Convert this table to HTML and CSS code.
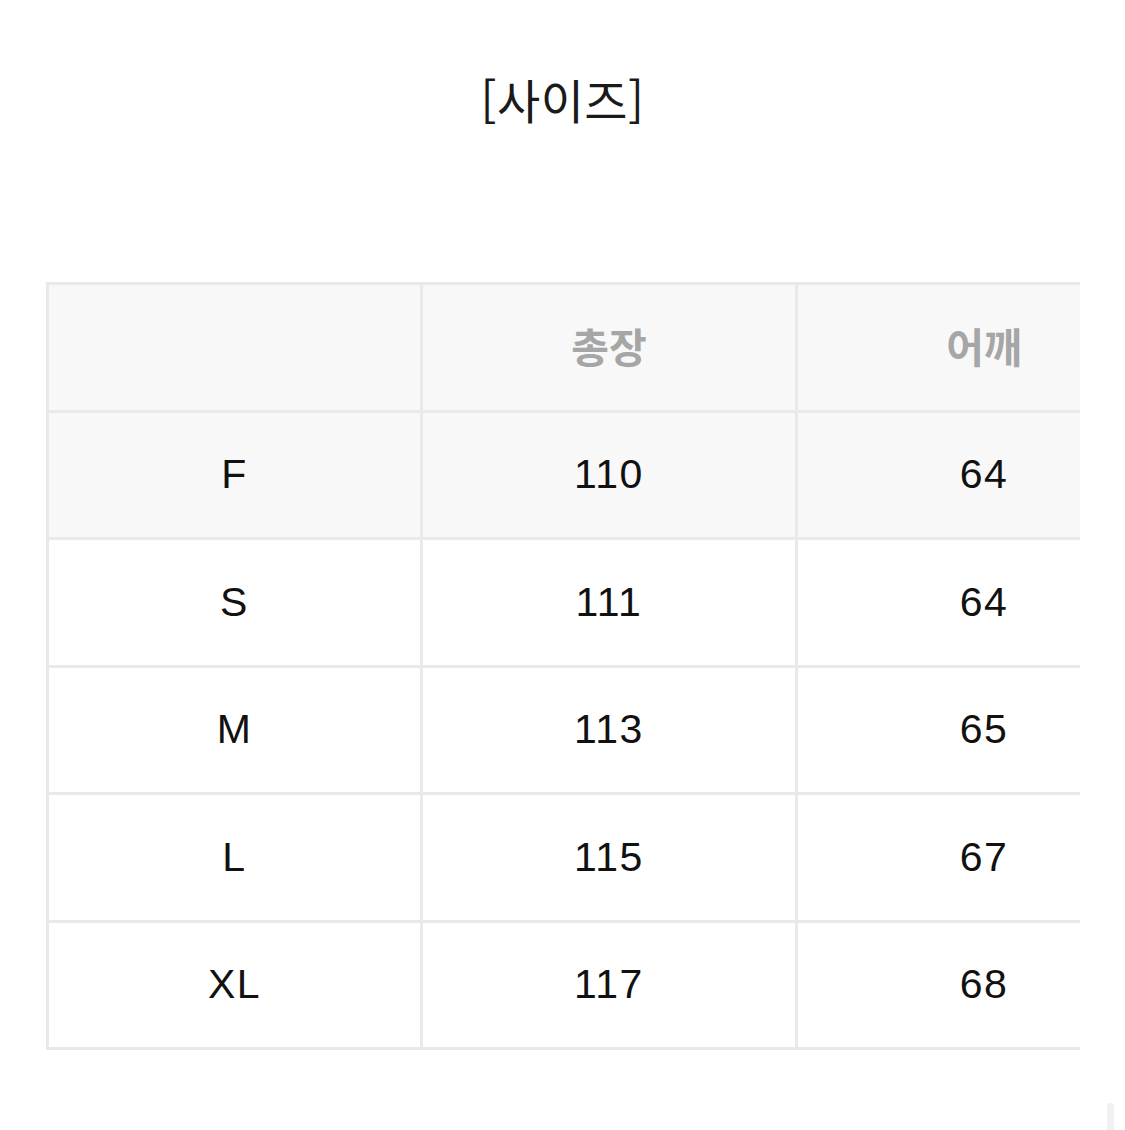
FILE: index.html
```html
<!DOCTYPE html>
<html lang="ko">
<head>
<meta charset="utf-8">
<link rel="stylesheet" href="styles.css">
</head>
<body>
<div class="page">
  <h1 class="title">[사이즈]</h1>
  <div class="table-clip">
    <div class="size-table">
      <div class="cell head"></div>
      <div class="cell head">총장</div>
      <div class="cell head">어깨</div>

      <div class="cell shade">F</div>
      <div class="cell shade">110</div>
      <div class="cell shade">64</div>

      <div class="cell">S</div>
      <div class="cell">111</div>
      <div class="cell">64</div>

      <div class="cell">M</div>
      <div class="cell">113</div>
      <div class="cell">65</div>

      <div class="cell">L</div>
      <div class="cell">115</div>
      <div class="cell">67</div>

      <div class="cell">XL</div>
      <div class="cell">117</div>
      <div class="cell">68</div>
    </div>
  </div>
  <div class="scroll-thumb"></div>
</div>
</body>
</html>
```

FILE: styles.css
```css
html, body {
  margin: 0;
  padding: 0;
  background: #ffffff;
}

.page {
  position: relative;
  width: 1125px;
  height: 1130px;
  overflow: hidden;
  font-family: "Liberation Sans", Arial, "Noto Sans CJK KR", sans-serif;
}

.title {
  margin: 0;
  height: 198px;
  line-height: 198px;
  text-align: center;
  font-family: "Noto Sans CJK KR", sans-serif;
  font-weight: 400;
  font-size: 47px;
  color: #1a1a1a;
  letter-spacing: 0.5px;
}

.table-clip {
  margin-top: 84px;
  margin-left: 46px;
  width: 1034px;
  overflow: hidden;
}

.size-table {
  display: grid;
  grid-template-columns: 371px 372px 372px;
  grid-auto-rows: 124.5px;
  gap: 3px;
  padding: 3px;
  width: max-content;
  background: #e9e9e9;
}

.cell {
  display: flex;
  align-items: center;
  justify-content: center;
  background: #ffffff;
  font-size: 41px;
  letter-spacing: 1.5px;
  color: #111111;
}

.cell.shade {
  background: #f8f8f8;
}

.cell.head {
  background: #f8f8f8;
  font-family: "Noto Sans CJK KR", sans-serif;
  font-weight: 700;
  font-size: 41px;
  letter-spacing: 0;
  padding-bottom: 5px;
  color: #a6a6a6;
}

.scroll-thumb {
  position: absolute;
  left: 1107px;
  top: 1103px;
  width: 7px;
  height: 30px;
  border-radius: 3px;
  background: #f1f1f1;
}
```
